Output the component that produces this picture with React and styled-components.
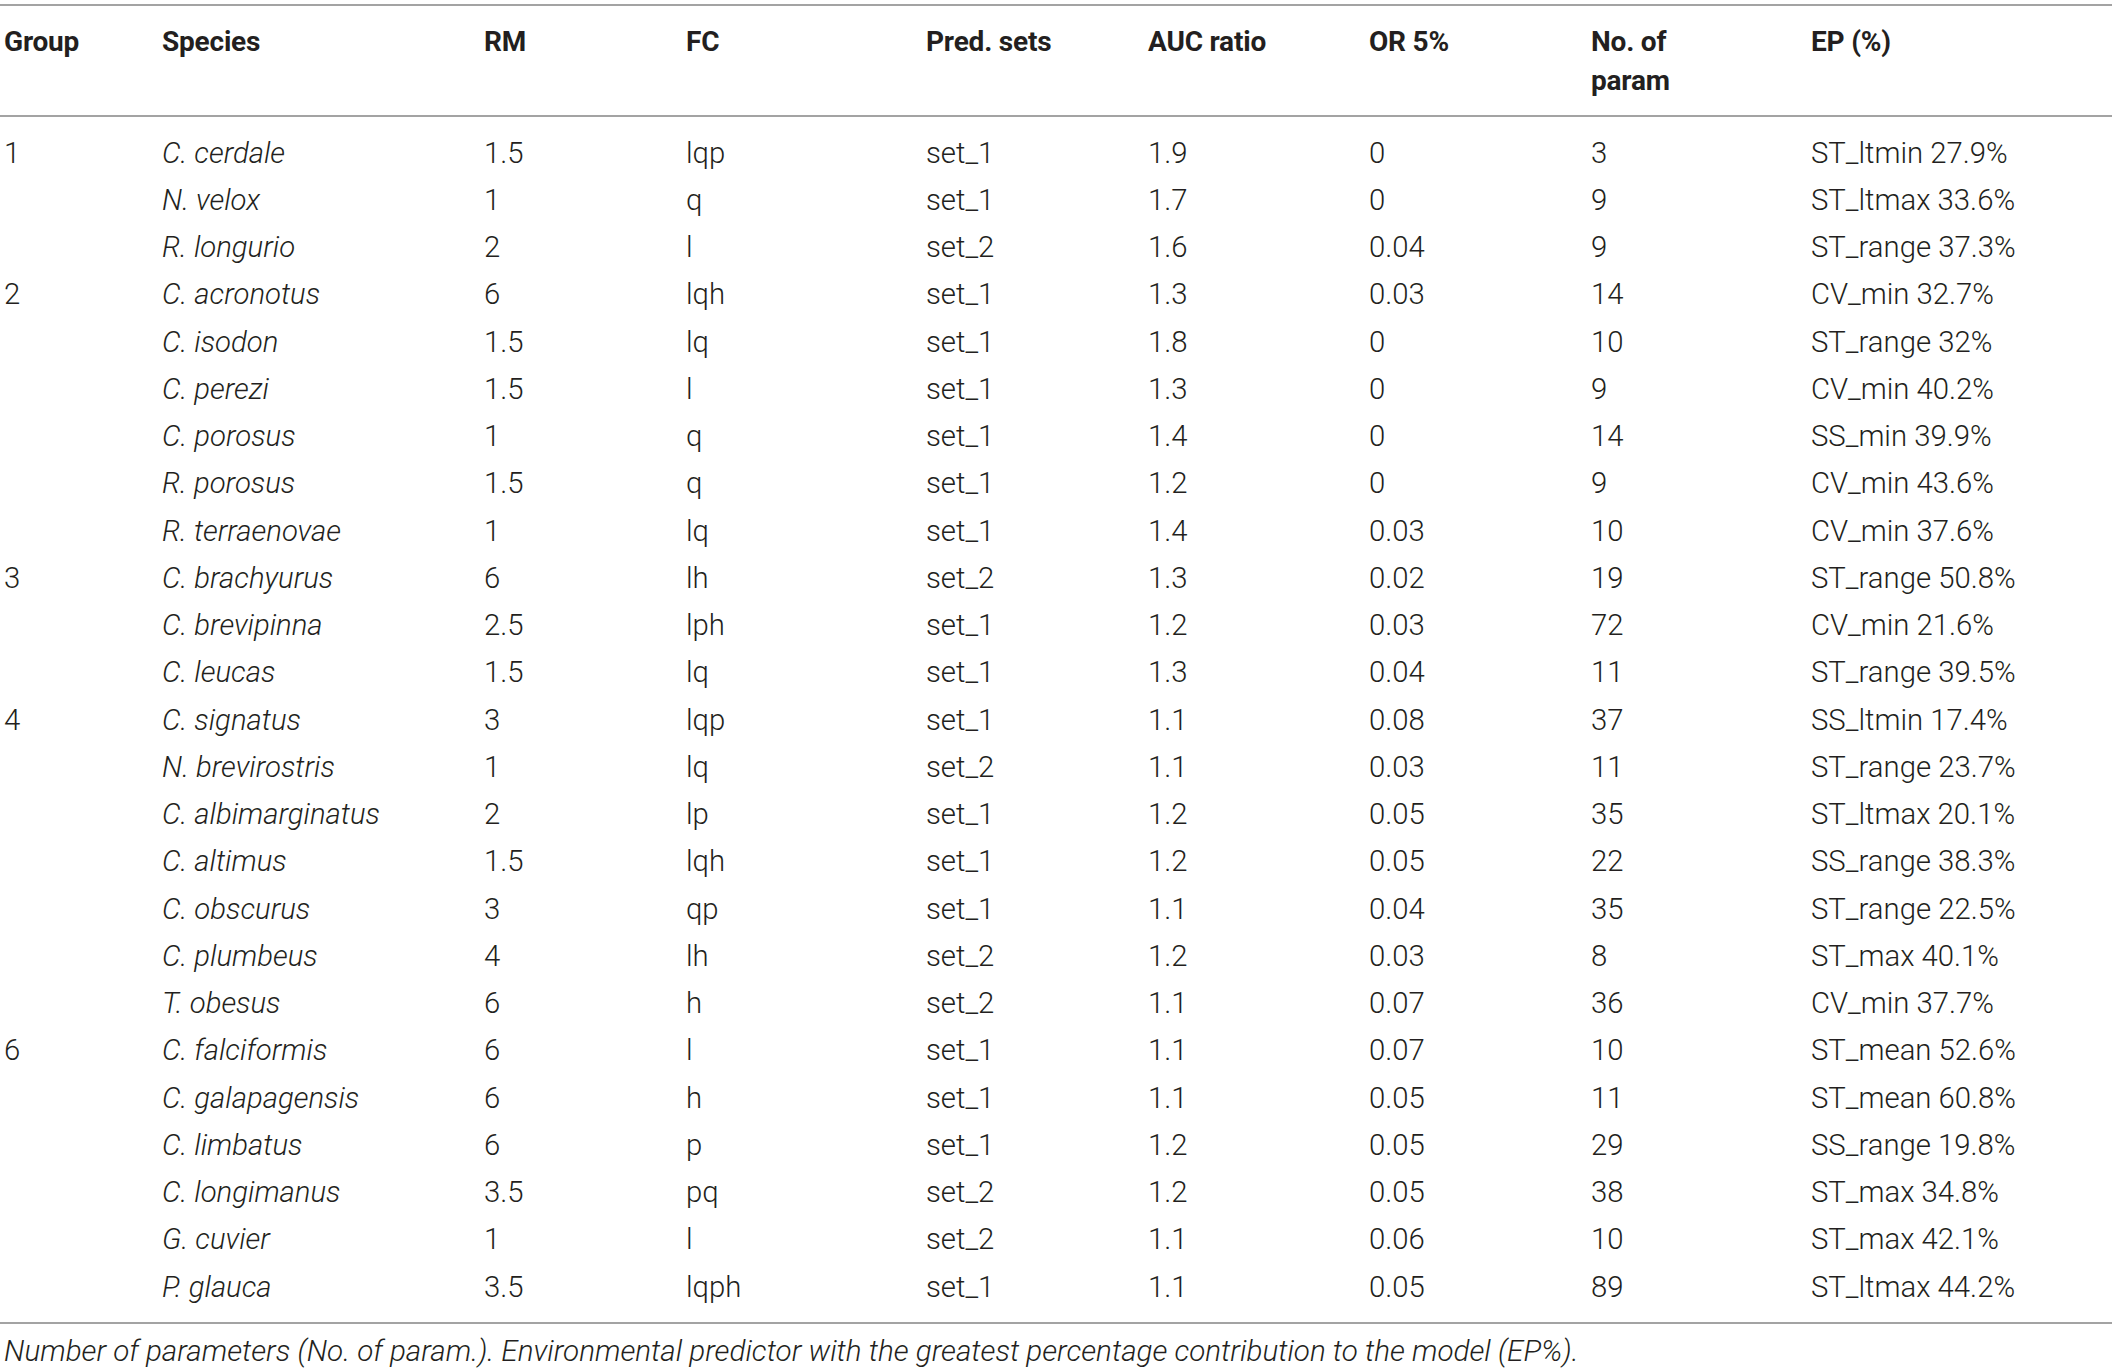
import React from 'react'
import styled, { createGlobalStyle } from 'styled-components'

const GlobalStyle = createGlobalStyle`
  html, body {
    margin: 0;
    padding: 0;
    background: #fff;
  }
  body {
    font-family: Roboto, "Liberation Sans", Arial, sans-serif;
    color: #231f20;
  }
`

const COLS = '158px 322px 202px 240px 222px 221px 222px 220px 1fr'

const TableWrap = styled.div`
  width: 2112px;
  padding-top: 4px;
`

const HeadRow = styled.div`
  display: grid;
  grid-template-columns: ${COLS};
  border-top: 2px solid #a3a3a3;
  border-bottom: 2px solid #a3a3a3;
  padding: 16px 0 15px;
`

const HeadCell = styled.div`
  padding-left: 4px;
  font-size: 28px;
  font-weight: 700;
  line-height: 39px;
  letter-spacing: -0.2px;
`

const Body = styled.div`
  padding: 12px 0;
  border-bottom: 2px solid #a3a3a3;
`

const Row = styled.div`
  display: grid;
  grid-template-columns: ${COLS};
  height: 47.25px;
  align-items: center;
`

const Cell = styled.div`
  padding-left: 4px;
  font-size: 29.3px;
  font-weight: 300;
  font-style: ${p => (p.$italic ? 'italic' : 'normal')};
  white-space: nowrap;
`

const Note = styled.p`
  margin: 0;
  padding: 8px 0 0 4px;
  font-size: 29.6px;
  font-weight: 300;
  font-style: italic;
  line-height: 39px;
  white-space: nowrap;
`

const headers = [
  'Group', 'Species', 'RM', 'FC', 'Pred. sets', 'AUC ratio', 'OR 5%', 'No. of\nparam', 'EP (%)'
]

const rows = [
  ['1', 'C. cerdale', '1.5', 'lqp', 'set_1', '1.9', '0', '3', 'ST_ltmin 27.9%'],
  ['', 'N. velox', '1', 'q', 'set_1', '1.7', '0', '9', 'ST_ltmax 33.6%'],
  ['', 'R. longurio', '2', 'l', 'set_2', '1.6', '0.04', '9', 'ST_range 37.3%'],
  ['2', 'C. acronotus', '6', 'lqh', 'set_1', '1.3', '0.03', '14', 'CV_min 32.7%'],
  ['', 'C. isodon', '1.5', 'lq', 'set_1', '1.8', '0', '10', 'ST_range 32%'],
  ['', 'C. perezi', '1.5', 'l', 'set_1', '1.3', '0', '9', 'CV_min 40.2%'],
  ['', 'C. porosus', '1', 'q', 'set_1', '1.4', '0', '14', 'SS_min 39.9%'],
  ['', 'R. porosus', '1.5', 'q', 'set_1', '1.2', '0', '9', 'CV_min 43.6%'],
  ['', 'R. terraenovae', '1', 'lq', 'set_1', '1.4', '0.03', '10', 'CV_min 37.6%'],
  ['3', 'C. brachyurus', '6', 'lh', 'set_2', '1.3', '0.02', '19', 'ST_range 50.8%'],
  ['', 'C. brevipinna', '2.5', 'lph', 'set_1', '1.2', '0.03', '72', 'CV_min 21.6%'],
  ['', 'C. leucas', '1.5', 'lq', 'set_1', '1.3', '0.04', '11', 'ST_range 39.5%'],
  ['4', 'C. signatus', '3', 'lqp', 'set_1', '1.1', '0.08', '37', 'SS_ltmin 17.4%'],
  ['', 'N. brevirostris', '1', 'lq', 'set_2', '1.1', '0.03', '11', 'ST_range 23.7%'],
  ['', 'C. albimarginatus', '2', 'lp', 'set_1', '1.2', '0.05', '35', 'ST_ltmax 20.1%'],
  ['', 'C. altimus', '1.5', 'lqh', 'set_1', '1.2', '0.05', '22', 'SS_range 38.3%'],
  ['', 'C. obscurus', '3', 'qp', 'set_1', '1.1', '0.04', '35', 'ST_range 22.5%'],
  ['', 'C. plumbeus', '4', 'lh', 'set_2', '1.2', '0.03', '8', 'ST_max 40.1%'],
  ['', 'T. obesus', '6', 'h', 'set_2', '1.1', '0.07', '36', 'CV_min 37.7%'],
  ['6', 'C. falciformis', '6', 'l', 'set_1', '1.1', '0.07', '10', 'ST_mean 52.6%'],
  ['', 'C. galapagensis', '6', 'h', 'set_1', '1.1', '0.05', '11', 'ST_mean 60.8%'],
  ['', 'C. limbatus', '6', 'p', 'set_1', '1.2', '0.05', '29', 'SS_range 19.8%'],
  ['', 'C. longimanus', '3.5', 'pq', 'set_2', '1.2', '0.05', '38', 'ST_max 34.8%'],
  ['', 'G. cuvier', '1', 'l', 'set_2', '1.1', '0.06', '10', 'ST_max 42.1%'],
  ['', 'P. glauca', '3.5', 'lqph', 'set_1', '1.1', '0.05', '89', 'ST_ltmax 44.2%']
]

const App = () => <>
    <GlobalStyle />
    <TableWrap>
      <HeadRow>
        { headers.map(h => <HeadCell key={ h }>
            { h.split('\n').map((line, i) => <div key={ i }>{ line }</div>) }
          </HeadCell>) }
      </HeadRow>
      <Body>
        { rows.map(r => <Row key={ r[1] }>
            { r.map((v, i) => <Cell key={ i } $italic={ i === 1 }>{ v }</Cell>) }
          </Row>) }
      </Body>
      <Note>
        Number of parameters (No. of param.). Environmental predictor with the greatest percentage contribution to the model (EP%).
      </Note>
    </TableWrap>
  </>

export default App
